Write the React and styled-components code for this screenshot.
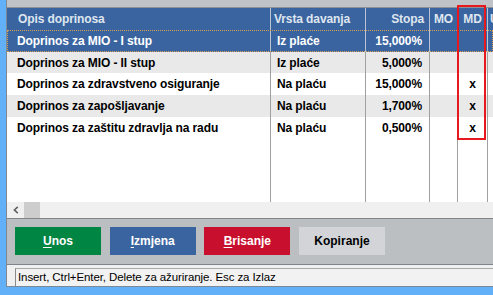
import React from "react";
import styled, { createGlobalStyle } from "styled-components";

const Global = createGlobalStyle`
  html, body { margin: 0; padding: 0; }
  body {
    background: #62b0f8;
    font-family: "Liberation Sans", Arial, sans-serif;
    overflow: hidden;
  }
`;

const COLS = "263px 95px 64px 28px 30px 1fr";

const Screen = styled.div`
  position: relative;
  width: 493px;
  height: 295px;
  box-sizing: border-box;
  padding: 0 0 8px 6px;
  background: #62b0f8;
  overflow: hidden;
`;

const Window = styled.div`
  height: 287px;
  box-sizing: border-box;
  border-left: 1px solid #7d8a96;
  border-bottom: 1px solid #7d8a96;
  display: flex;
  flex-direction: column;
  background: #ffffff;
  overflow: hidden;
`;

const TopStrip = styled.div`
  height: 7px;
  flex: none;
  background: #c0c4c8;
  border-bottom: 1px solid #8e9297;
`;

const Table = styled.div`
  flex: 1;
  display: flex;
  flex-direction: column;
  min-height: 0;
`;

const Row = styled.div`
  display: grid;
  grid-template-columns: ${COLS};
  ${(p) => (p.$fill ? "flex: 1;" : `flex: none; height: ${p.$h}px;`)}
  background: ${(p) => p.$bg};
  color: ${(p) => p.$color || "#000"};
  font-size: 12px;
  font-weight: bold;
  ${(p) => p.$focus && `outline: 1px dotted #d8a050; outline-offset: -1px;`}
`;

const Cell = styled.div`
  display: flex;
  align-items: center;
  justify-content: ${(p) => p.$align || "flex-start"};
  padding-left: ${(p) => p.$pl || 0}px;
  padding-right: ${(p) => p.$pr || 0}px;
  border-left: ${(p) => (p.$first ? "none" : `1px solid ${p.$sep}`)};
  white-space: nowrap;
  overflow: hidden;
  letter-spacing: -0.1px;
`;

const ScrollBar = styled.div`
  height: 16px;
  flex: none;
  background: #f0f0f0;
  border-bottom: 1px solid #7f858a;
  display: flex;
  align-items: stretch;
`;

const ScrollArrow = styled.div`
  width: 17px;
  display: flex;
  align-items: center;
  justify-content: center;
`;

const Thumb = styled.div`
  width: 16px;
  background: #cdcdcd;
`;

const ButtonPanel = styled.div`
  height: 46px;
  flex: none;
  box-sizing: border-box;
  background: #bcbfc2;
  border-bottom: 1px solid #7f858a;
  padding: 8px 0 0 8px;
  display: flex;
  align-items: flex-start;
  gap: 8.67px;
`;

const Button = styled.button`
  width: 86px;
  height: 28px;
  border: none;
  margin: 0;
  padding: 0;
  background: ${(p) => p.$bg};
  color: ${(p) => p.$fg || "#fff"};
  font-family: "Liberation Sans", Arial, sans-serif;
  font-size: 12px;
  font-weight: bold;
  display: flex;
  align-items: center;
  justify-content: center;
  cursor: default;
  u { text-decoration-thickness: 1px; text-underline-offset: 2px; }
`;

const StatusBar = styled.div`
  height: 21px;
  flex: none;
  box-sizing: border-box;
  background: #f0f0f0;
  padding: 3px 0 0 8px;
  display: flex;
`;

const StatusBox = styled.div`
  flex: 1;
  border-top: 1px solid #a8a8a8;
  border-left: 1px solid #8a8a8a;
  background: #f2f2f2;
  padding: 1px 0 0 2px;
  font-size: 11.5px;
  color: #000;
  letter-spacing: -0.1px;
  white-space: nowrap;
  line-height: 15px;
`;

const Highlight = styled.div`
  position: absolute;
  left: 457px;
  top: 5px;
  width: 29px;
  height: 135px;
  box-sizing: border-box;
  border: 2.5px solid #e8191e;
  pointer-events: none;
`;

const HEAD_SEP = "#b9c4d3";
const ROW_SEP = "#a0a0a0";

const rows = [
  { opis: "Doprinos za MIO - I stup", vrsta: "Iz plaće", stopa: "15,000%", md: "", h: 22 },
  { opis: "Doprinos za MIO - II stup", vrsta: "Iz plaće", stopa: "5,000%", md: "", h: 21 },
  { opis: "Doprinos za zdravstveno osiguranje", vrsta: "Na plaću", stopa: "15,000%", md: "x", h: 22 },
  { opis: "Doprinos za zapošljavanje", vrsta: "Na plaću", stopa: "1,700%", md: "x", h: 22 },
  { opis: "Doprinos za zaštitu zdravlja na radu", vrsta: "Na plaću", stopa: "0,500%", md: "x", h: 21 },
];

function DataRow({ r, i }) {
  const selected = i === 0;
  const bg = selected ? "#3a64a0" : i % 2 === 1 ? "#e9e9ea" : "#ffffff";
  const sep = selected ? HEAD_SEP : ROW_SEP;
  return (
    <Row $h={r.h} $bg={bg} $color={selected ? "#ffffff" : "#000"} $focus={selected}>
      <Cell $first $pl={10}>{r.opis}</Cell>
      <Cell $sep={sep} $pl={6}>{r.vrsta}</Cell>
      <Cell $sep={sep} $align="flex-end" $pr={7}>{r.stopa}</Cell>
      <Cell $sep={sep} $align="center"></Cell>
      <Cell $sep={sep} $align="center">{r.md}</Cell>
      <Cell $sep={sep}></Cell>
    </Row>
  );
}

export default function App() {
  return (
    <>
      <Global />
      <Screen>
        <Window>
          <TopStrip />
          <Table>
            <Row $h={22} $bg="#3a64a0" $color="#dfe6ef">
              <Cell $first $pl={11}>Opis doprinosa</Cell>
              <Cell $sep={HEAD_SEP} $pl={3}>Vrsta davanja</Cell>
              <Cell $sep={HEAD_SEP} $align="flex-end" $pr={5}>Stopa</Cell>
              <Cell $sep={HEAD_SEP} $align="center">MO</Cell>
              <Cell $sep={HEAD_SEP} $align="center">MD</Cell>
              <Cell $sep={HEAD_SEP} $pl={2}>U</Cell>
            </Row>
            {rows.map((r, i) => (
              <DataRow key={i} r={r} i={i} />
            ))}
            <Row $fill $bg="#ffffff">
              <Cell $first />
              <Cell $sep={ROW_SEP} />
              <Cell $sep={ROW_SEP} />
              <Cell $sep={ROW_SEP} />
              <Cell $sep={ROW_SEP} />
              <Cell $sep={ROW_SEP} />
            </Row>
          </Table>
          <ScrollBar>
            <ScrollArrow>
              <svg width="6" height="8" viewBox="0 0 6 8">
                <path d="M4.8 0.8 L1.4 4 L4.8 7.2" fill="none" stroke="#606060" strokeWidth="1.6" />
              </svg>
            </ScrollArrow>
            <Thumb />
          </ScrollBar>
          <ButtonPanel>
            <Button $bg="#008543"><u>U</u>nos</Button>
            <Button $bg="#3a64a0"><u>I</u>zmjena</Button>
            <Button $bg="#c8102e"><u>B</u>risanje</Button>
            <Button $bg="#d2d4d8" $fg="#000">Kopiranje</Button>
          </ButtonPanel>
          <StatusBar>
            <StatusBox>Insert, Ctrl+Enter, Delete za ažuriranje. Esc za Izlaz</StatusBox>
          </StatusBar>
        </Window>
        <Highlight />
      </Screen>
    </>
  );
}
